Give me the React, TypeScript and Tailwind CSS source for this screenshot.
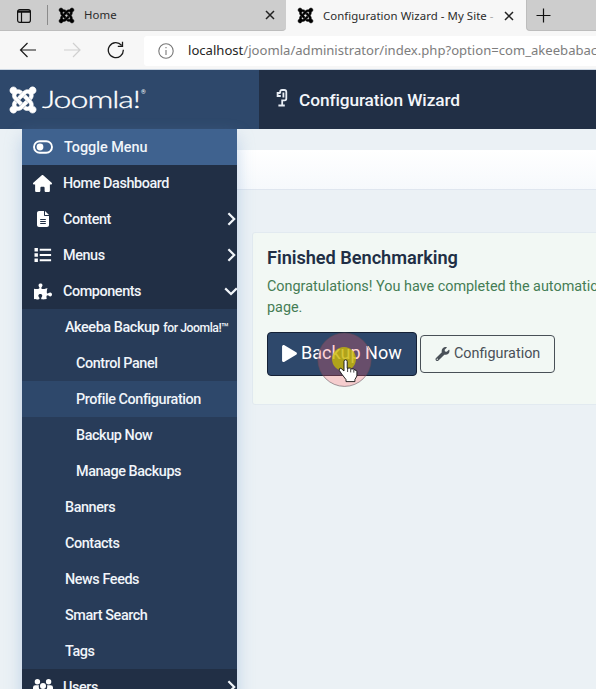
import type { ReactNode } from "react";
import { FaJoomla, FaPlay, FaWrench, FaPuzzlePiece } from "react-icons/fa";
import { FaHouse, FaFileLines } from "react-icons/fa6";

function TabStrip() {
  return (
    <div className="flex h-[31px] items-stretch bg-[#f7f7f7] font-['Noto_Sans',sans-serif] text-[11.4px] text-[#2b2b2b]">
      <div className="flex w-[286px] shrink-0 items-center rounded-br-[4px] border-b border-[#bdbdbd] bg-[#cdcdcd]">
        <svg className="ml-4 mt-px h-4 w-4 shrink-0" viewBox="0 0 16 16" fill="none" stroke="#111" strokeWidth="1.2">
          <rect x="1.6" y="1.6" width="12.8" height="12.8" rx="2.2" />
          <path d="M1.6 4.2h12.8M1.6 3h12.8M5.5 4.6v9.8" />
        </svg>
        <div className="ml-[15px] h-5 w-px bg-[#8b8b8b]" />
        <FaJoomla className="ml-[10px] h-[17px] w-[17px] text-black" stroke="black" strokeWidth="14" />
        <span className="ml-[9px] tracking-[0.1px]">Home</span>
        <Cross className="ml-auto mr-[11px]" />
      </div>
      <div className="flex w-[240px] shrink-0 items-center">
        <FaJoomla className="ml-[11px] h-[17px] w-[17px] shrink-0 text-black" stroke="black" strokeWidth="14" />
        <span className="ml-[9px] whitespace-nowrap tracking-[0.06px]">Configuration Wizard - My Site <span className="text-[#aaa]">-</span></span>
        <Cross className="ml-auto mr-[12px]" />
      </div>
      <div className="flex flex-1 items-center rounded-bl-[4px] border-b border-l border-[#bdbdbd] bg-[#cdcdcd]">
        <svg className="ml-[9px] h-[15px] w-[15px]" viewBox="0 0 15 15" stroke="#111" strokeWidth="1.2">
          <path d="M7.5 .5v14M.5 7.5h14" />
        </svg>
      </div>
    </div>
  );
}

function Cross({ className }: { className: string }) {
  return (
    <svg className={`h-[10px] w-[10px] shrink-0 ${className}`} viewBox="0 0 10 10" stroke="#222" strokeWidth="1.5">
      <path d="M1 1l8 8M9 1l-8 8" />
    </svg>
  );
}

function AddressBar() {
  return (
    <div className="flex h-[39px] items-center border-b border-[#cbd6e2] bg-[#f7f7f7]">
      <svg className="ml-[19px] h-[18px] w-[18px] shrink-0" viewBox="0 0 18 18" fill="none" stroke="#1b1b1b" strokeWidth="1.2">
        <path d="M17 9H1.5M8.5 2l-7 7 7 7" />
      </svg>
      <svg className="ml-[26px] h-[18px] w-[18px] shrink-0" viewBox="0 0 18 18" fill="none" stroke="#d0d0d0" strokeWidth="1.2">
        <path d="M1 9h15.5M10 2l7 7-7 7" />
      </svg>
      <svg className="ml-[26px] h-[18px] w-[18px] shrink-0" viewBox="0 0 18 18" fill="none" stroke="#1b1b1b" strokeWidth="1.3">
        <path d="M16.3 8.8A7.5 7.5 0 1 1 14.6 4.4M15.5 .7v4.7h-4.7" />
      </svg>
      <div className="ml-[19px] mt-px flex h-[30px] flex-1 items-center overflow-hidden rounded-l-[3px] bg-white">
        <svg className="ml-[14px] h-4 w-4 shrink-0" viewBox="0 0 16 16" fill="none" stroke="#777" strokeWidth="1.1">
          <circle cx="8" cy="8" r="7.2" />
          <path d="M8 7v5M8 4v1.3" />
        </svg>
        <span className="ml-[14px] mt-px whitespace-nowrap font-['Noto_Sans',sans-serif] text-[13.1px] text-[#7d7d7d]">
          <span className="text-[#252525]">localhost</span>/joomla/administrator/index.php?option=com_akeebabackup
        </span>
      </div>
    </div>
  );
}

function CactusIcon() {
  return (
    <svg className="ml-[17px] mt-[-4px] h-[18px] w-[12px]" viewBox="0 0 12 18" fill="none" stroke="#e9eef5" strokeWidth="1.8">
      <path d="M4.2 4.6V2.6Q4.2 1 6 1H8.2Q10.3 1 10.3 3V9.6Q10.3 11.4 8.7 11.4H6.2V16.4M4.8 7H1.6V4H4.2M7.4 3.4V8.4M2.4 16.5H8.8" />
    </svg>
  );
}

function SiteHeader() {
  return (
    <header className="flex h-[59px] bg-[#212f45] text-[#f3f6fa]">
      <div className="flex w-[259px] items-center bg-[#2e486b]">
        <FaJoomla className="ml-[8px] h-[30px] w-[30px] shrink-0 text-white" stroke="white" strokeWidth="10" />
        <div className="ml-[4px] mt-[4px] flex h-[30px] items-center">
          <div className="w-[98px]">
            <span className="inline-block origin-left scale-x-[1.43] whitespace-nowrap font-['Lato',sans-serif] text-[22.5px] font-light leading-none tracking-[-0.75px] text-white [-webkit-text-stroke:0.3px_white]">Joomla!</span>
          </div>
          <span className="mb-[19px] ml-px text-[6px] leading-none text-white">®</span>
        </div>
      </div>
      <div className="flex items-center">
        <CactusIcon />
        <h1 className="ml-[11px] mt-[2px] text-[17.3px] font-medium tracking-[-0.1px]">Configuration Wizard</h1>
      </div>
    </header>
  );
}

function ToggleIcon() {
  return (
    <svg className="-ml-px h-[14px] w-[20px]" viewBox="0 0 20 14">
      <rect x="1" y="1.2" width="18" height="11.6" rx="5.8" fill="none" stroke="white" strokeWidth="1.9" />
      <circle cx="7" cy="7" r="3.4" fill="white" />
    </svg>
  );
}

function ListIcon() {
  return (
    <svg className="h-[14px] w-[18px]" viewBox="0 0 18 14" fill="white">
      <path d="M.5 0h3.4v3.4H.5zM.5 5.3h3.4v3.4H.5zM.5 10.6h3.4V14H.5zM5.7 .7h11.4v2H5.7zM5.7 6h11.4v2H5.7zM5.7 11.3h11.4v2H5.7z" />
    </svg>
  );
}

function UsersIcon() {
  return (
    <svg className="h-[17px] w-[20px]" viewBox="0 0 20 17" fill="white">
      <circle cx="4.4" cy="2.8" r="2.7" />
      <circle cx="15.6" cy="2.8" r="2.7" />
      <circle cx="10" cy="7" r="3" />
      <path d="M0 11V8.5Q0 6.2 2.4 6.2H6Q5.2 9 7 11zM20 11V8.5Q20 6.2 17.6 6.2H14Q14.8 9 13 11zM4 16Q4 11 7.5 11H12.5Q16 11 16 16z" />
    </svg>
  );
}

function Chevron({ down = false }: { down?: boolean }) {
  return down ? (
    <svg className="mt-px h-[9px] w-[14px] shrink-0" viewBox="0 0 14 9" fill="none" stroke="#f1f5fa" strokeWidth="2.2">
      <path d="M1.2 1.4L7 7l5.8-5.6" />
    </svg>
  ) : (
    <svg className="h-[14px] w-[9px] shrink-0" viewBox="0 0 9 14" fill="none" stroke="#f1f5fa" strokeWidth="2.2">
      <path d="M1.4 1.2L7.2 7l-5.8 5.8" />
    </svg>
  );
}

function MenuRow({ icon, label, arrow }: { icon: ReactNode; label: string; arrow?: ReactNode }) {
  return (
    <div className="flex h-9 items-center overflow-hidden">
      <div className="ml-[10px] flex w-[21px] shrink-0 justify-center">{icon}</div>
      <span className="ml-[10px] mt-[2px]">{label}</span>
      {arrow && <div className="ml-auto flex w-3 justify-center">{arrow}</div>}
    </div>
  );
}

const akeebaItems = ["Control Panel", "Profile Configuration", "Backup Now", "Manage Backups"];
const componentItems = ["Banners", "Contacts", "News Feeds", "Smart Search", "Tags"];

function Sidebar() {
  const right = <Chevron />;
  return (
    <nav className="z-10 w-[215px] shrink-0 bg-[#212f45] text-[14.4px] font-medium tracking-[-0.42px] text-[#f1f5fa] shadow-[0_8px_16px_rgba(120,160,210,0.4)]">
      <div className="bg-[#3f628f] pl-px tracking-normal">
        <MenuRow icon={<ToggleIcon />} label="Toggle Menu" />
      </div>
      <MenuRow icon={<FaHouse className="h-[17px] w-[19px] text-white" />} label="Home Dashboard" />
      <MenuRow icon={<FaFileLines className="h-4 w-[14px] text-white" />} label="Content" arrow={right} />
      <MenuRow icon={<ListIcon />} label="Menus" arrow={right} />
      <MenuRow icon={<FaPuzzlePiece className="h-[17px] w-[18px] text-white" />} label="Components" arrow={<Chevron down />} />
      <div className="bg-[#283c59]">
        <div className="flex h-9 items-center whitespace-nowrap pl-[43px] pt-[2px]">
          Akeeba Backup<span className="ml-[4px] text-[12.2px]">for Joomla!™</span>
        </div>
        {akeebaItems.map((item) => (
          <div key={item} className={`flex h-9 items-center pl-[54px] pt-[2px] ${item === "Profile Configuration" ? "bg-[#2e486b]" : ""}`}>
            {item}
          </div>
        ))}
        {componentItems.map((item) => (
          <div key={item} className="flex h-9 items-center pl-[43px] pt-[2px]">{item}</div>
        ))}
      </div>
      <MenuRow icon={<UsersIcon />} label="Users" arrow={right} />
    </nav>
  );
}

function ClickPointer() {
  return (
    <svg className="absolute left-[50px] top-0 h-[56px] w-[56px]" viewBox="0 0 56 56">
      <circle cx="27.5" cy="27.7" r="26.7" fill="#ff5c6c" fillOpacity=".28" stroke="#5b4b55" strokeOpacity=".7" strokeWidth=".8" />
      <circle cx="27" cy="27" r="12" fill="#c8c000" fillOpacity=".75" />
      <path d="M27 29.5q0-1.7 1.6-1.7t1.6 1.7v6.7l3-.2 1 .9 2.6.1.8 1 1.7.4.6 1.3v4.3l-2 3.6v2H29v-2l-4.3-5.6-2.4-3.6q-.7-2.2 1.6-2.2l3.1 2.8z" fill="white" stroke="#111" strokeWidth=".9" />
      <path d="M30.6 36v4M33.7 37v3.4M36.8 38v2.6" stroke="#111" strokeWidth=".8" />
    </svg>
  );
}

function MainPanel() {
  return (
    <main className="min-w-0 flex-1">
      <div className="mt-[21px] h-[40px] border-b border-[#dfe6ef] bg-gradient-to-b from-white to-[#f6f9fc]" />
      <section className="ml-[15px] mt-[42px] h-[173px] w-[500px] rounded-[3px] border border-[#e2eaf0] bg-[#f2f8f4] pl-[14px] pt-[12px]">
        <h2 className="h-[24px] text-[18.2px] font-semibold leading-[25px] tracking-[-0.04px] text-[#212f45]">Finished Benchmarking</h2>
        <p className="mt-[7px] whitespace-nowrap text-[14.4px] leading-[21px] text-[#457d54]">
          Congratulations! You have completed the automatic configuration
          <br />
          page.
        </p>
        <div className="relative mt-[14px] flex items-center gap-[3px]">
          <button className="flex h-[44px] w-[150px] items-center rounded-[4px] border border-[#152136] bg-[#2e486b] pl-[14px] text-[18px] text-white">
            <FaPlay className="mb-px h-[17px] w-[15px]" />
            <span className="mb-[3px] ml-[4px] whitespace-nowrap">Backup Now</span>
          </button>
          <button className="flex h-[38px] w-[135px] items-center rounded-[4px] border border-[#495057] pl-[14px] text-[14.4px] text-[#495057]">
            <FaWrench className="mb-px h-[14px] w-[15px]" />
            <span className="ml-[4px]">Configuration</span>
          </button>
          <ClickPointer />
        </div>
      </section>
    </main>
  );
}

export default function App() {
  return (
    <div className="h-[689px] w-[596px] overflow-hidden bg-[#ebf1f5] font-['Roboto',sans-serif]">
      <TabStrip />
      <AddressBar />
      <SiteHeader />
      <div className="flex pl-[22px]">
        <Sidebar />
        <MainPanel />
      </div>
    </div>
  );
}
